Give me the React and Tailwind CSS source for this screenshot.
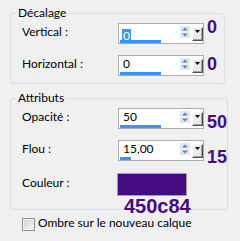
import React from "react";

const Spinner = () => (
    <svg width="10" height="12" viewBox="0 0 10 12" className="shrink-0 mt-[2px]">
        <rect x="0" y="0" width="10" height="5.5" fill="#dde5ef" />
        <rect x="0" y="6.5" width="10" height="5.5" fill="#dde5ef" />
        <path d="M5 1.5 8 4.5 2 4.5Z" fill="#6a84ad" />
        <path d="M5 10.5 8 7.5 2 7.5Z" fill="#6a84ad" />
    </svg>
);

const DropButton = () => (
    <div className="w-[11px] h-[14px] mt-[3px] ml-[2px] shrink-0 flex justify-center pt-[2px] border border-t-white border-l-white border-r-[#505050] border-b-[#505050] bg-[#ececec] shadow-[inset_-1px_-1px_0_#a0a0a0]">
        <svg width="5" height="3" viewBox="0 0 5 3">
            <path d="M0 0H5L2.5 3Z" fill="#000" />
        </svg>
    </div>
);

const Row = ({ label, value, selected, barClass, note, noteClass }) => (
    <div className="flex items-start h-[21px]">
        <div className="w-[107px] pl-[11px] pt-[1px] leading-[16px] shrink-0">{label}</div>
        <div className="w-[86px] h-[21px] shrink-0 flex border border-[#abadb3] bg-white">
            <div className="flex-1 flex flex-col h-full">
                {selected ? (
                    <div className="h-[16px] pl-[3px] pt-[3px]">
                        <span className="inline-block h-[13px] px-[1px] leading-[13px] bg-[#3399ff] text-white">{value}</span>
                    </div>
                ) : (
                    <div className="h-[16px] pl-[4px] leading-[16px]">{value}</div>
                )}
                <div className={`mt-auto ml-[1px] h-[3px] bg-[#3a94f2] ${barClass}`} />
            </div>
            <Spinner />
            <DropButton />
        </div>
        <div className={`ml-[3px] text-[18px] leading-none font-bold text-[#450c84] [font-family:'Liberation_Sans',Arial,sans-serif] ${noteClass}`}>
            {note}
        </div>
    </div>
);

const Group = ({ title, children }) => (
    <fieldset className="w-[215px] border border-[#d5dfe5] rounded-[3px]">
        <legend className="ml-[5px] px-[2px] leading-[16px]">{title}</legend>
        {children}
    </fieldset>
);

export default function App() {
    return (
        <div className="w-[240px] h-[241px] bg-[#f0f0f0] pt-[5px] pl-[10px] text-[12px] text-black [font-family:Lato,'Noto_Sans',sans-serif] overflow-hidden">
            <Group title="Décalage">
                <div className="mt-[2px] pb-[7px] flex flex-col gap-[11px]">
                    <Row label="Vertical :" value="0" selected barClass="w-[41px]" note="0" noteClass="mt-[-5px]" />
                    <Row label="Horizontal :" value="0" barClass="w-[41px]" note="0" noteClass="mt-0" />
                </div>
            </Group>

            <div className="mt-[6px]">
                <Group title="Attributs">
                    <div className="mt-[2px] pb-[13px] flex flex-col">
                        <Row label="Opacité :" value="50" barClass="w-[41px]" note="50" noteClass="mt-[5px]" />
                        <div className="mt-[11px]">
                            <Row label="Flou :" value="15,00" barClass="w-[11px]" note="15" noteClass="mt-[8px]" />
                        </div>
                        <div className="mt-[12px] flex items-start">
                            <div className="w-[106px] pl-[11px] pt-[2px] leading-[16px] shrink-0">Couleur :</div>
                            <div className="relative">
                                <div className="w-[70px] h-[23px] border border-[#a0a0a0] bg-[#450c84]" />
                                <div className="absolute left-[7px] top-[23px] text-[20px] leading-none font-bold text-[#450c84] [font-family:'Liberation_Sans',Arial,sans-serif]">
                                    450c84
                                </div>
                            </div>
                        </div>
                    </div>
                </Group>
            </div>

            <div className="mt-[5px] pl-[12px] flex items-start">
                <div className="w-[13px] h-[13px] mt-[3px] shrink-0 border border-[#8f8f8f] bg-gradient-to-br from-[#d4d4d4] to-[#f6f6f6] shadow-[inset_0_0_0_1px_#f2f2f2]" />
                <span className="ml-[3px] leading-[16px]">Ombre sur le nouveau calque</span>
            </div>
        </div>
    );
}
